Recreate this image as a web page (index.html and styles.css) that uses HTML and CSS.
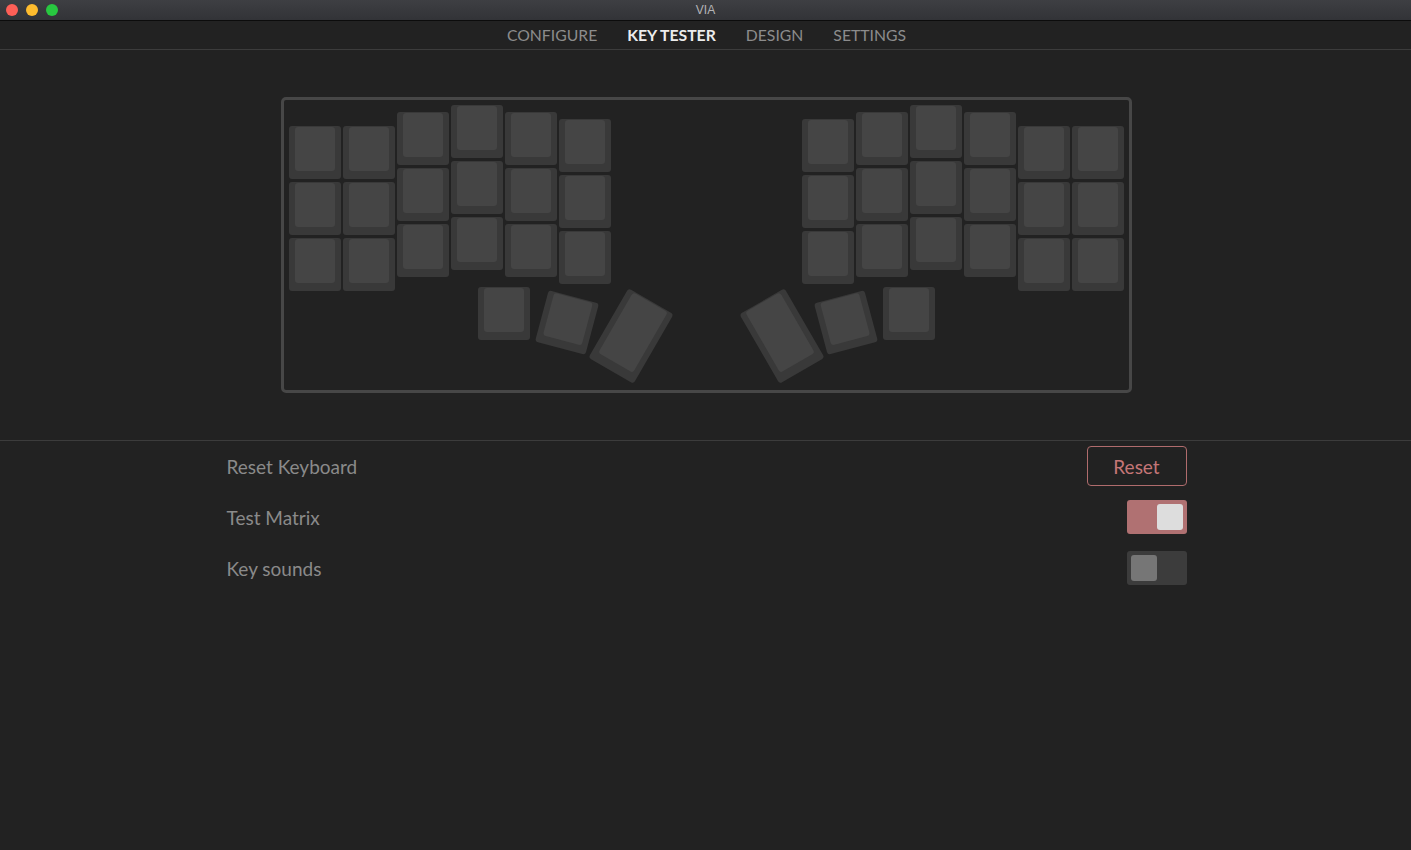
FILE: index.html
```html
<!DOCTYPE html>
<html>
<head>
<meta charset="utf-8">
<title>VIA</title>
<link rel="stylesheet" href="styles.css">
</head>
<body>
<div class="titlebar">
  <div class="lights">
    <span class="light red"></span>
    <span class="light yellow"></span>
    <span class="light green"></span>
  </div>
  <div class="title">VIA</div>
</div>
<nav class="nav">
  <span class="nav-item">CONFIGURE</span>
  <span class="nav-item active">KEY TESTER</span>
  <span class="nav-item">DESIGN</span>
  <span class="nav-item">SETTINGS</span>
</nav>
<section class="stage">
  <div class="keyboard">
    <!-- left half -->
    <div class="key" style="left:5px;top:26px"></div>
    <div class="key" style="left:5px;top:82px"></div>
    <div class="key" style="left:5px;top:138px"></div>
    <div class="key" style="left:59px;top:26px"></div>
    <div class="key" style="left:59px;top:82px"></div>
    <div class="key" style="left:59px;top:138px"></div>
    <div class="key" style="left:113px;top:12px"></div>
    <div class="key" style="left:113px;top:68px"></div>
    <div class="key" style="left:113px;top:124px"></div>
    <div class="key" style="left:167px;top:5px"></div>
    <div class="key" style="left:167px;top:61px"></div>
    <div class="key" style="left:167px;top:117px"></div>
    <div class="key" style="left:221px;top:12px"></div>
    <div class="key" style="left:221px;top:68px"></div>
    <div class="key" style="left:221px;top:124px"></div>
    <div class="key" style="left:275px;top:19px"></div>
    <div class="key" style="left:275px;top:75px"></div>
    <div class="key" style="left:275px;top:131px"></div>
    <div class="key" style="left:194px;top:187px"></div>
    <div class="key rot15" style="left:257px;top:196px"></div>
    <div class="key tall rot30" style="left:321px;top:196px"></div>
    <!-- right half -->
    <div class="key" style="left:518px;top:19px"></div>
    <div class="key" style="left:518px;top:75px"></div>
    <div class="key" style="left:518px;top:131px"></div>
    <div class="key" style="left:572px;top:12px"></div>
    <div class="key" style="left:572px;top:68px"></div>
    <div class="key" style="left:572px;top:124px"></div>
    <div class="key" style="left:626px;top:5px"></div>
    <div class="key" style="left:626px;top:61px"></div>
    <div class="key" style="left:626px;top:117px"></div>
    <div class="key" style="left:680px;top:12px"></div>
    <div class="key" style="left:680px;top:68px"></div>
    <div class="key" style="left:680px;top:124px"></div>
    <div class="key" style="left:734px;top:26px"></div>
    <div class="key" style="left:734px;top:82px"></div>
    <div class="key" style="left:734px;top:138px"></div>
    <div class="key" style="left:788px;top:26px"></div>
    <div class="key" style="left:788px;top:82px"></div>
    <div class="key" style="left:788px;top:138px"></div>
    <div class="key" style="left:599px;top:187px"></div>
    <div class="key rotm15" style="left:536px;top:196px"></div>
    <div class="key tall rotm30" style="left:472px;top:196px"></div>
  </div>
</section>
<section class="settings">
  <div class="row">
    <span class="label">Reset Keyboard</span>
    <button class="reset-btn">Reset</button>
  </div>
  <div class="row">
    <span class="label">Test Matrix</span>
    <span class="toggle on"><span class="knob"></span></span>
  </div>
  <div class="row">
    <span class="label">Key sounds</span>
    <span class="toggle"><span class="knob"></span></span>
  </div>
</section>
</body>
</html>
```
FILE: styles.css
```css
* { box-sizing: border-box; }
html, body {
  margin: 0;
  padding: 0;
  background: #222222;
  font-family: "Lato", "Noto Sans", sans-serif;
  height: 850px;
  overflow: hidden;
}
.titlebar {
  height: 21px;
  background: linear-gradient(#3e3f43, #323337);
  border-bottom: 1px solid #0c0c0c;
  position: relative;
  display: flex;
  align-items: center;
  justify-content: center;
}
.lights {
  position: absolute;
  left: 6px;
  top: 4px;
  display: flex;
  gap: 8px;
}
.light {
  width: 12px;
  height: 12px;
  border-radius: 50%;
  display: block;
}
.red { background: #fe5f57; }
.yellow { background: #febc2e; }
.green { background: #28c840; }
.title {
  font-family: "Liberation Sans", "Noto Sans", sans-serif;
  font-size: 12px;
  color: #b4b4b6;
  line-height: 20px;
}
.nav {
  height: 29px;
  border-bottom: 1px solid #3c3c3c;
  display: flex;
  justify-content: center;
  align-items: center;
  gap: 30px;
  padding-left: 2px;
}
.nav-item {
  font-size: 15.75px;
  color: #8c8c8c;
  line-height: 28px;
}
.nav-item.active {
  color: #ececec;
  font-weight: 700;
}
.stage {
  height: 391px;
  display: flex;
  align-items: center;
  justify-content: center;
  border-bottom: 1px solid #3c3c3c;
  padding-left: 1px;
}
.keyboard {
  position: relative;
  width: 851px;
  height: 296px;
  border: 3px solid #474747;
  border-radius: 5px;
}
.key {
  position: absolute;
  width: 52px;
  height: 53px;
  background: #393939;
  border-radius: 3px;
  padding: 1px 6px 0 6px;
}
.key::after {
  content: "";
  display: block;
  width: 40px;
  height: 44px;
  background: #454545;
  border-radius: 3px;
}
.key.tall { height: 80px; }
.key.tall::after { height: 70px; }
.rot15 { transform: rotate(15deg); }
.rot30 { transform: rotate(30deg); }
.rotm15 { transform: rotate(-15deg); }
.rotm30 { transform: rotate(-30deg); }
.settings {
  width: 962px;
  margin: 0 auto;
  padding-top: 5px;
  display: flex;
  flex-direction: column;
  gap: 11px;
}
.row {
  height: 40px;
  display: flex;
  align-items: center;
  justify-content: space-between;
}
.label {
  font-size: 19px;
  color: #8a8a8a;
  padding-left: 2px;
}
.reset-btn {
  width: 100px;
  height: 40px;
  background: transparent;
  border: 1px solid #b06c6d;
  border-radius: 4px;
  color: #c57677;
  font-family: "Lato", "Noto Sans", sans-serif;
  font-size: 19px;
  padding: 0;
}
.toggle {
  width: 60px;
  height: 34px;
  border-radius: 3px;
  background: #3c3c3c;
  display: flex;
  align-items: center;
  padding: 0 4px;
}
.toggle.on {
  background: #b07172;
  justify-content: flex-end;
}
.knob {
  width: 26px;
  height: 26px;
  border-radius: 3px;
  background: #767676;
  display: block;
}
.toggle.on .knob { background: #dddddd; }
```
